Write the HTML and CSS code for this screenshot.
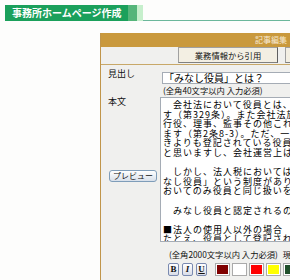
FILE: index.html
```
<!DOCTYPE html>
<html lang="ja">
<head>
<meta charset="utf-8">
<title>記事編集</title>
<link rel="stylesheet" href="styles.css">
</head>
<body>
<div class="top">
  <div class="title">事務所ホームページ作成</div>
  <div class="tab1"></div>
  <div class="tab2"></div>
  <div class="rule"></div>
</div>
<div class="panel">
  <div class="bar">記事編集</div>
  <div class="btnrow">
    <button class="cite">業務情報から引用</button>
    <button class="next"></button>
  </div>
  <div class="row">
    <div class="label">見出し</div>
    <div class="field">
      <div class="input">「みなし役員」とは？</div>
      <div class="note">(全角40文字以内 入力必須)</div>
    </div>
  </div>
  <div class="row">
    <div class="label">本文
      <button class="preview">プレビュー</button>
    </div>
    <div class="field">
      <div class="textarea"><div class="ln">　会社法において役員とは、取締役</div><div class="ln">す（第329条）。また会社法施行規則</div><div class="ln">行役、理事、監事その他これらに準</div><div class="ln">ます（第2条8-3）。ただ、一般的</div><div class="ln">きよりも登記されている役員のほう</div><div class="ln">と思いますし、会社運営上はそれで</div><div class="ln">&nbsp;</div><div class="ln">　しかし、法人税においては、「み</div><div class="ln">なし役員」という制度があり、役員</div><div class="ln">おいてのみ役員と同じ扱いをします</div><div class="ln">&nbsp;</div><div class="ln">　みなし役員と認定されるのは以下</div><div class="ln">&nbsp;</div><div class="ln">■法人の使用人以外の場合</div><div class="ln">たとえ、役員として登記されていな</div></div>
      <div class="note note2">(全角2000文字以内 入力必須)<span class="count">現在の文字数</span></div>
      <div class="tools">
        <button class="tb b">B</button>
        <button class="tb i">I</button>
        <button class="tb u">U</button>
        <span class="sw first" style="background:#800000"></span>
        <span class="sw" style="background:#ffffff"></span>
        <span class="sw" style="background:#ff0000"></span>
        <span class="sw" style="background:#ffff00"></span>
        <span class="sw" style="background:#1f4f2a"></span>
      </div>
    </div>
  </div>
</div>
</body>
</html>
```
FILE: styles.css
```
html, body {
  margin: 0;
  padding: 0;
}
body {
  width: 290px;
  height: 280px;
  overflow: hidden;
  background: #fdfdfc;
  font-family: "Noto Sans CJK JP", "Noto Sans", sans-serif;
  color: #111;
}
.top {
  display: flex;
  margin: 5px 0 0 5px;
  height: 16px;
}
.title {
  width: 123px;
  box-sizing: border-box;
  padding-left: 7px;
  background: #1ba05b;
  color: #fff;
  font-weight: bold;
  font-size: 10px;
  line-height: 16px;
  white-space: nowrap;
}
.tab1 { width: 9px; background: #55b57a; }
.tab2 { width: 6px; background: #c6efcc; }
.rule {
  flex: 1;
  border-bottom: 1px solid #6bb79b;
}
.panel {
  margin: 12px 0 0 100px;
  width: 300px;
  height: 260px;
  border-left: 1px solid #c0954a;
  background: #f0f0ee;
}
.bar {
  height: 14px;
  background: #c9993d;
  color: #f7ead2;
  font-size: 8px;
  line-height: 14px;
  padding-left: 154px;
}
.btnrow {
  display: flex;
  height: 17px;
  border-bottom: 1px solid #c8a868;
  padding-left: 77px;
}
.btnrow button {
  font-family: inherit;
  padding: 0;
  margin: 0;
  height: 16px;
  background: #f3efe3;
  border: 1px solid #a0a0a0;
  border-right-color: #606060;
  border-bottom-color: #808080;
  font-size: 8.3px;
  line-height: 14px;
  color: #111;
}
.cite { width: 100px; }
.next { width: 20px; margin-left: 7px !important; }
.row {
  display: grid;
  grid-template-columns: 59px 1fr;
}
.label {
  padding-left: 7px;
  font-size: 9px;
  line-height: 10px;
  padding-top: 4px;
  display: flex;
  flex-direction: column;
  align-items: flex-start;
}
.row + .row .label { padding-top: 0; }
.field {
  padding-bottom: 2px;
}
.input {
  margin: 7px 0 0 2px;
  height: 12px;
  box-sizing: border-box;
  border: 1px solid #a5acb5;
  background: #fff;
  font-size: 10px;
  line-height: 10px;
  padding-left: 1px;
  white-space: nowrap;
  color: #000;
}
.note {
  margin: 1px 0 0 3px;
  font-size: 8.3px;
  line-height: 10px;
  white-space: nowrap;
}
.note2 {
  margin: 7px 0 0 9px;
}
.count {
  margin-left: 5px;
}
.preview {
  margin: 63px 0 0 1px;
  width: 48px;
  height: 12px;
  padding: 0;
  font-family: inherit;
  font-size: 8px;
  line-height: 10px;
  color: #111;
  border: 1px solid #7f9db9;
  border-radius: 3px;
  background: linear-gradient(#ffffff, #d8e0ea);
}
.textarea {
  height: 145px;
  box-sizing: border-box;
  border: 1px solid #a5acb5;
  background: #fff;
  padding: 2px 0 0 2px;
  font-size: 9px;
  letter-spacing: 1px;
  line-height: 9.6px;
  overflow: hidden;
  color: #000;
}
.ln {
  white-space: pre;
  height: 9.6px;
}
.tools {
  display: flex;
  align-items: center;
  gap: 2px;
  margin: 4px 0 0 8px;
}
.tb {
  width: 11px;
  height: 13px;
  padding: 0;
  margin-right: 1px;
  border: 1px solid #7a8ab0;
  border-radius: 2px;
  background: linear-gradient(#ffffff, #d9dde8);
  font-family: "Liberation Serif", serif;
  font-weight: bold;
  font-size: 9px;
  line-height: 11px;
  color: #111;
}
.tb.i { font-style: italic; }
.tb.u { text-decoration: underline; }
.sw {
  width: 15px;
  height: 13px;
  box-sizing: border-box;
  border: 1px solid #aaa;
  box-shadow: inset 0 0 0 1px #fff;
}
.sw.first { margin-left: 5px; }
```
